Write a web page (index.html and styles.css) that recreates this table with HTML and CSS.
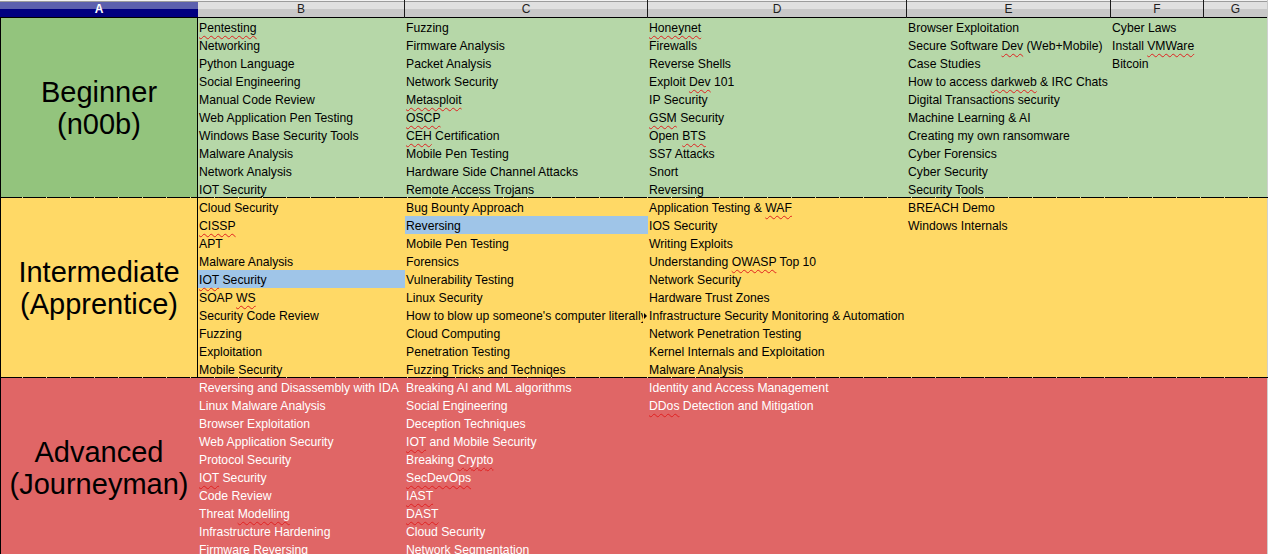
FILE: index.html
```html
<!DOCTYPE html>
<html lang="en">
<head>
<meta charset="utf-8">
<title>Security Training Roadmap</title>
<link rel="stylesheet" href="styles.css">
</head>
<body>
<div class="sheet">
  <div class="colhead">
    <div class="ch ch-a sel">A</div>
    <div class="ch ch-b">B</div>
    <div class="ch ch-c">C</div>
    <div class="ch ch-d">D</div>
    <div class="ch ch-e">E</div>
    <div class="ch ch-f">F</div>
    <div class="ch ch-g">G</div>
  </div>

  <section class="group beginner">
    <div class="label">Beginner<br>(n00b)</div>
    <div class="col col-b">
      <div class="cell"><span class="sp">Pentesting</span></div>
      <div class="cell">Networking</div>
      <div class="cell">Python Language</div>
      <div class="cell">Social Engineering</div>
      <div class="cell">Manual Code Review</div>
      <div class="cell">Web Application Pen Testing</div>
      <div class="cell">Windows Base Security Tools</div>
      <div class="cell">Malware Analysis</div>
      <div class="cell">Network Analysis</div>
      <div class="cell"><span class="sp">IOT</span> Security</div>
    </div>
    <div class="col col-c">
      <div class="cell">Fuzzing</div>
      <div class="cell">Firmware Analysis</div>
      <div class="cell">Packet Analysis</div>
      <div class="cell">Network Security</div>
      <div class="cell"><span class="sp">Metasploit</span></div>
      <div class="cell"><span class="sp">OSCP</span></div>
      <div class="cell"><span class="sp">CEH</span> Certification</div>
      <div class="cell">Mobile Pen Testing</div>
      <div class="cell">Hardware Side Channel Attacks</div>
      <div class="cell">Remote Access Trojans</div>
    </div>
    <div class="col col-d">
      <div class="cell"><span class="sp">Honeynet</span></div>
      <div class="cell">Firewalls</div>
      <div class="cell">Reverse Shells</div>
      <div class="cell">Exploit <span class="sp">Dev</span> 101</div>
      <div class="cell">IP Security</div>
      <div class="cell"><span class="sp">GSM</span> Security</div>
      <div class="cell">Open <span class="sp">BTS</span></div>
      <div class="cell">SS7 Attacks</div>
      <div class="cell">Snort</div>
      <div class="cell">Reversing</div>
    </div>
    <div class="col col-e">
      <div class="cell">Browser Exploitation</div>
      <div class="cell">Secure Software <span class="sp">Dev</span> (Web+Mobile)</div>
      <div class="cell">Case Studies</div>
      <div class="cell">How to access <span class="sp">darkweb</span> &amp; IRC Chats</div>
      <div class="cell">Digital Transactions security</div>
      <div class="cell">Machine Learning &amp; AI</div>
      <div class="cell">Creating my own ransomware</div>
      <div class="cell">Cyber Forensics</div>
      <div class="cell">Cyber Security</div>
      <div class="cell">Security Tools</div>
    </div>
    <div class="col col-f">
      <div class="cell">Cyber Laws</div>
      <div class="cell">Install <span class="sp">VMWare</span></div>
      <div class="cell">Bitcoin</div>
    </div>
    <div class="col col-g"></div>
  </section>

  <section class="group intermediate">
    <div class="label">Intermediate<br>(Apprentice)</div>
    <div class="col col-b">
      <div class="cell">Cloud Security</div>
      <div class="cell"><span class="sp">CISSP</span></div>
      <div class="cell">APT</div>
      <div class="cell">Malware Analysis</div>
      <div class="cell hl"><span class="sp">IOT</span> Security</div>
      <div class="cell">SOAP <span class="sp">WS</span></div>
      <div class="cell">Security Code Review</div>
      <div class="cell">Fuzzing</div>
      <div class="cell">Exploitation</div>
      <div class="cell">Mobile Security</div>
    </div>
    <div class="col col-c">
      <div class="cell">Bug Bounty Approach</div>
      <div class="cell hl">Reversing</div>
      <div class="cell">Mobile Pen Testing</div>
      <div class="cell">Forensics</div>
      <div class="cell">Vulnerability Testing</div>
      <div class="cell">Linux Security</div>
      <div class="cell clip"><span class="txt">How to blow up someone's computer literally</span><span class="more"></span></div>
      <div class="cell">Cloud Computing</div>
      <div class="cell">Penetration Testing</div>
      <div class="cell">Fuzzing Tricks and <span class="sp">Techniqes</span></div>
    </div>
    <div class="col col-d">
      <div class="cell">Application Testing &amp; <span class="sp">WAF</span></div>
      <div class="cell">IOS Security</div>
      <div class="cell">Writing Exploits</div>
      <div class="cell">Understanding <span class="sp">OWASP</span> Top 10</div>
      <div class="cell">Network Security</div>
      <div class="cell">Hardware Trust Zones</div>
      <div class="cell">Infrastructure Security Monitoring &amp; Automation</div>
      <div class="cell">Network Penetration Testing</div>
      <div class="cell">Kernel Internals and Exploitation</div>
      <div class="cell">Malware Analysis</div>
    </div>
    <div class="col col-e">
      <div class="cell">BREACH Demo</div>
      <div class="cell">Windows Internals</div>
    </div>
    <div class="col col-f"></div>
    <div class="col col-g"></div>
  </section>

  <section class="group advanced">
    <div class="label">Advanced<br>(Journeyman)</div>
    <div class="col col-b">
      <div class="cell">Reversing and Disassembly with IDA</div>
      <div class="cell">Linux Malware Analysis</div>
      <div class="cell">Browser Exploitation</div>
      <div class="cell">Web Application Security</div>
      <div class="cell">Protocol Security</div>
      <div class="cell"><span class="sp">IOT</span> Security</div>
      <div class="cell">Code Review</div>
      <div class="cell">Threat <span class="sp">Modelling</span></div>
      <div class="cell">Infrastructure Hardening</div>
      <div class="cell">Firmware Reversing</div>
    </div>
    <div class="col col-c">
      <div class="cell">Breaking AI and ML algorithms</div>
      <div class="cell">Social Engineering</div>
      <div class="cell">Deception Techniques</div>
      <div class="cell"><span class="sp">IOT</span> and Mobile Security</div>
      <div class="cell">Breaking <span class="sp">Crypto</span></div>
      <div class="cell"><span class="sp">SecDevOps</span></div>
      <div class="cell"><span class="sp">IAST</span></div>
      <div class="cell"><span class="sp">DAST</span></div>
      <div class="cell">Cloud Security</div>
      <div class="cell">Network Segmentation</div>
    </div>
    <div class="col col-d">
      <div class="cell">Identity and Access Management</div>
      <div class="cell"><span class="sp">DDos</span> Detection and Mitigation</div>
    </div>
    <div class="col col-e"></div>
    <div class="col col-f"></div>
    <div class="col col-g"></div>
  </section>
</div>
</body>
</html>
```
FILE: styles.css
```css
html, body {
  margin: 0;
  padding: 0;
  background: #ffffff;
}

body {
  width: 1268px;
  height: 554px;
  overflow: hidden;
  font-family: "Liberation Sans", Arial, sans-serif;
  font-size: 12.2px;
  color: #000;
}

.sheet {
  display: flex;
  flex-direction: column;
  width: 1268px;
}

/* ---------- column header ---------- */
.colhead {
  display: flex;
  height: 18px;
}

.ch {
  box-sizing: border-box;
  height: 18px;
  line-height: 19px;
  text-align: center;
  font-size: 12px;
  color: #1e1e1e;
  background: linear-gradient(to bottom,
    #f2f2f2 0 1px,
    #9c9c9c 1px 2px,
    #e0e0e0 2px 9px,
    #c8c8c8 9px 17px,
    #000000 17px 18px);
  border-right: 1px solid #1a1a1a;
}

.ch.sel {
  color: #ffffff;
  font-weight: bold;
  border-right: none;
  background: linear-gradient(to bottom,
    #f2f2f2 0 1px,
    #9c9c9c 1px 2px,
    #5c60ae 2px 9px,
    #000080 9px 17px,
    #000000 17px 18px);
}

.ch-a { width: 198px; }
.ch-b { width: 207px; }
.ch-c { width: 243px; }
.ch-d { width: 259px; }
.ch-e { width: 204px; }
.ch-f { width: 93px; }
.ch-g { width: 64px; border-right: 1px solid #c8c8c8; }

/* ---------- groups ---------- */
.group {
  display: flex;
  box-sizing: border-box;
  height: 180px;
  border-bottom: 1px solid #000;
  border-image: repeating-linear-gradient(90deg, #000 0 23px, #d8d8a0 23px 24px) 1;
}

.label {
  box-sizing: border-box;
  width: 198px;
  flex: none;
  border-left: 1px solid #000;
  border-right: 1px solid #000;
  display: flex;
  align-items: center;
  justify-content: center;
  text-align: center;
  font-size: 29px;
  line-height: 32px;
  color: #000;
}

.col {
  display: flex;
  flex-direction: column;
  flex: none;
}

.col-b { width: 207px; }
.col-c { width: 243px; }
.col-d { width: 259px; }
.col-e { width: 204px; }
.col-f { width: 93px; }
.col-g { width: 63px; border-right: 1px solid #d0d0d0; }

.cell {
  flex: none;
  box-sizing: border-box;
  height: 18px;
  line-height: 18px;
  padding: 1px 0 0 1px;
  white-space: nowrap;
}

.cell.clip {
  display: flex;
  align-items: flex-start;
}

.cell.clip .txt {
  flex: 1 1 auto;
  min-width: 0;
  overflow: hidden;
}

.more {
  flex: none;
  width: 0;
  height: 0;
  margin: 6px 1px 0 1px;
  border-top: 3px solid transparent;
  border-bottom: 3px solid transparent;
  border-left: 3px solid #000;
}

.cell.hl {
  background: #9fc5e8;
}

.sp {
  text-decoration: underline wavy #e02020;
  text-decoration-thickness: 1px;
  text-underline-offset: 3px;
}

/* colours per level */
.beginner { background: #b6d7a8; }
.beginner .label { background: #93c47d; }

.intermediate { background: #ffd966; }
.intermediate .label { background: #ffd966; }

.advanced { background: #e06666; }
.advanced .label {
  background: #e06666;
  border-right-color: #e06666;
}
.advanced .cell { color: #ffffff; }
```
